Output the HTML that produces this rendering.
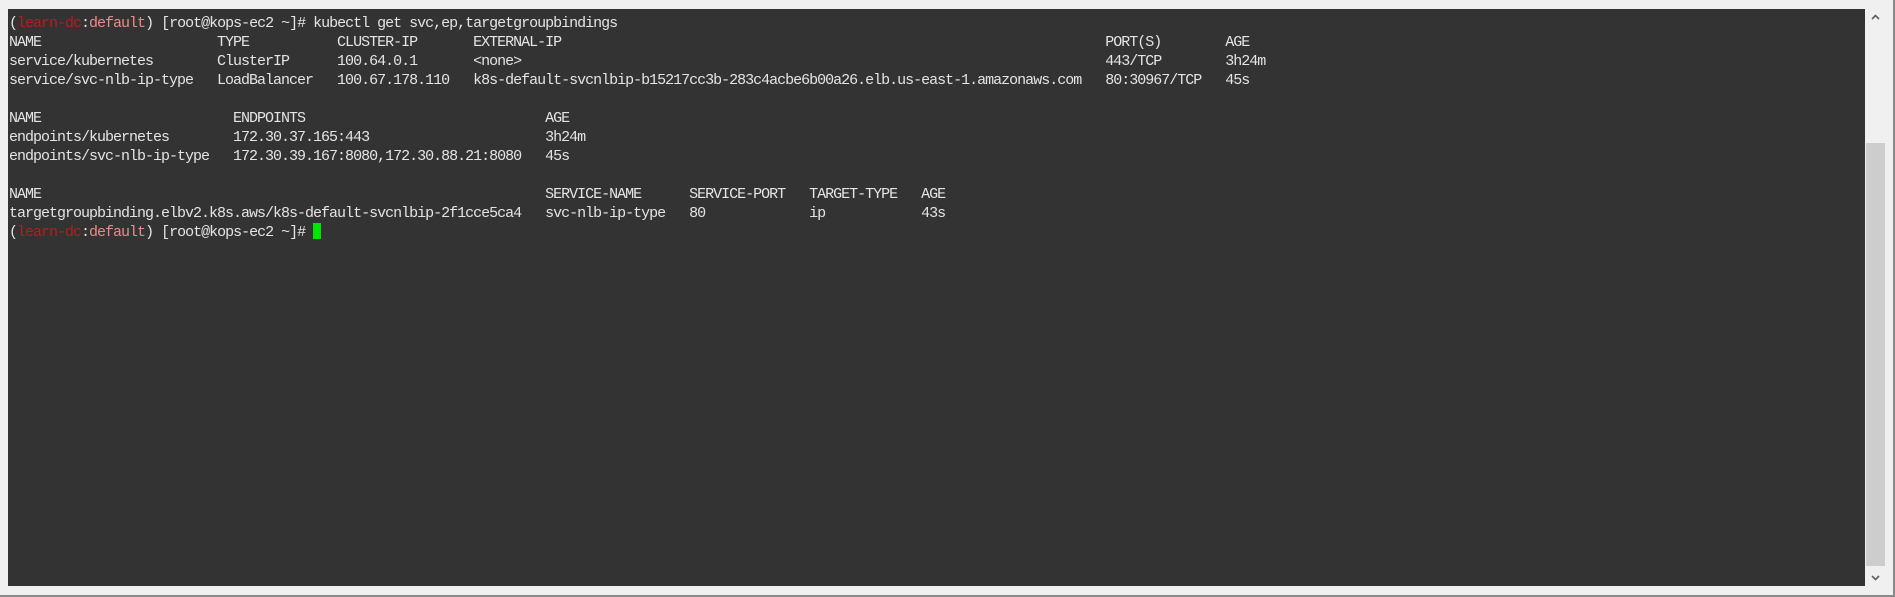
<!DOCTYPE html>
<html><head><meta charset="utf-8"><style>
html,body{margin:0;padding:0;width:1895px;height:597px;overflow:hidden;background:#f0f0f0;}
.win{position:absolute;left:0;top:0;width:1893px;height:595px;border-right:2px solid #8a8a8a;border-bottom:2px solid #8a8a8a;background:#f0f0f0;}
.term{position:absolute;left:8px;top:9px;width:1857px;height:577px;background:#333333;}
pre{position:absolute;left:1px;top:5px;margin:0;font-family:"Liberation Mono",monospace;font-size:15px;letter-spacing:-1px;line-height:19px;color:#e4e4e4;white-space:pre;}
.r{color:#b81c1c}.p{color:#ec8a8a}
.cur{display:inline-block;width:8px;height:16px;background:#00e600;vertical-align:-3px;}
.sb{position:absolute;left:1866px;top:9px;width:19px;height:577px;background:#f0f0f0;}
.thumb{position:absolute;left:0;top:134px;width:19px;height:423px;background:#cdcdcd;}
.ar{position:absolute;left:5px;width:9px;height:9px;}
</style></head><body>
<div class="win"></div>
<div class="term"><pre>(<span class="r">learn-dc</span>:<span class="p">default</span>) [root@kops-ec2 ~]# kubectl get svc,ep,targetgroupbindings
NAME                      TYPE           CLUSTER-IP       EXTERNAL-IP                                                                    PORT(S)        AGE
service/kubernetes        ClusterIP      100.64.0.1       &lt;none&gt;                                                                         443/TCP        3h24m
service/svc-nlb-ip-type   LoadBalancer   100.67.178.110   k8s-default-svcnlbip-b15217cc3b-283c4acbe6b00a26.elb.us-east-1.amazonaws.com   80:30967/TCP   45s

NAME                        ENDPOINTS                              AGE
endpoints/kubernetes        172.30.37.165:443                      3h24m
endpoints/svc-nlb-ip-type   172.30.39.167:8080,172.30.88.21:8080   45s

NAME                                                               SERVICE-NAME      SERVICE-PORT   TARGET-TYPE   AGE
targetgroupbinding.elbv2.k8s.aws/k8s-default-svcnlbip-2f1cce5ca4   svc-nlb-ip-type   80             ip            43s
(<span class="r">learn-dc</span>:<span class="p">default</span>) [root@kops-ec2 ~]# <span class="cur"></span></pre></div>
<div class="sb">
<svg class="ar" style="top:4px" viewBox="0 0 9 9"><path d="M1 6 L4.5 2.5 L8 6" stroke="#606060" stroke-width="1.6" fill="none"/></svg>
<div class="thumb"></div>
<svg class="ar" style="top:564px" viewBox="0 0 9 9"><path d="M1 3 L4.5 6.5 L8 3" stroke="#606060" stroke-width="1.6" fill="none"/></svg>
</div>
</body></html>
